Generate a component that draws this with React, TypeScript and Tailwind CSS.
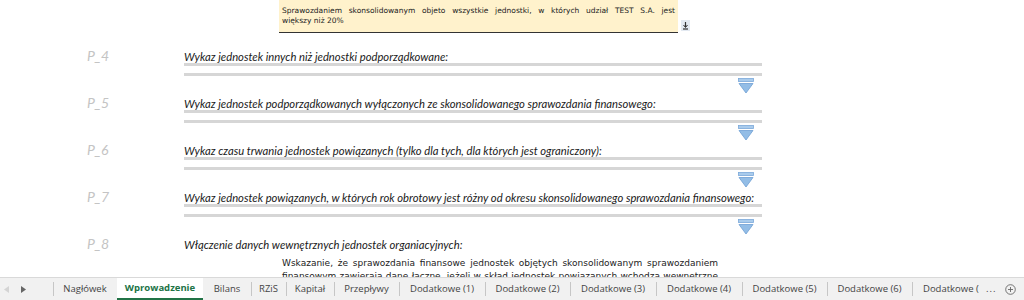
import React from 'react'

type Row = { id: string; title: string }

const rows: Row[] = [
  { id: 'P_4', title: 'Wykaz jednostek innych niż jednostki podporządkowane:' },
  { id: 'P_5', title: 'Wykaz jednostek podporządkowanych wyłączonych ze skonsolidowanego sprawozdania finansowego:' },
  { id: 'P_6', title: 'Wykaz czasu trwania jednostek powiązanych (tylko dla tych, dla których jest ograniczony):' },
  { id: 'P_7', title: 'Wykaz jednostek powiązanych, w których rok obrotowy jest różny od okresu skonsolidowanego sprawozdania finansowego:' },
]

const tabs: { name: string; w: string; active?: boolean }[] = [
  { name: 'Nagłówek', w: 'w-[64px]' },
  { name: 'Wprowadzenie', w: 'w-[86px]', active: true },
  { name: 'Bilans', w: 'w-[48px]' },
  { name: 'RZiS', w: 'w-[35px]' },
  { name: 'Kapitał', w: 'w-[48px]' },
  { name: 'Przepływy', w: 'w-[65px]' },
  { name: 'Dodatkowe (1)', w: 'w-[86px]' },
  { name: 'Dodatkowe (2)', w: 'w-[85px]' },
  { name: 'Dodatkowe (3)', w: 'w-[86px]' },
  { name: 'Dodatkowe (4)', w: 'w-[86px]' },
  { name: 'Dodatkowe (5)', w: 'w-[85px]' },
  { name: 'Dodatkowe (6)', w: 'w-[85px]' },
]

function ExpandIcon() {
  return (
    <svg width="18" height="16" viewBox="0 0 18 16">
      <rect x="1.5" y="0.5" width="15" height="3" fill="#a9cbec" stroke="#7aa9da" strokeWidth="0.8" />
      <polygon points="2,5.5 16,5.5 9,15" fill="#93bde6" stroke="#6f9fd4" strokeWidth="0.8" />
    </svg>
  )
}

function ResizeIcon() {
  return (
    <svg width="9" height="11" viewBox="0 0 9 11">
      <rect x="0" y="0" width="9" height="11" fill="#e3e9f1" />
      <path d="M4.5 2 V7" stroke="#333" strokeWidth="1.2" />
      <path d="M2.5 5 L4.5 7.5 L6.5 5" stroke="#333" strokeWidth="1" fill="none" />
      <path d="M2 9 H7" stroke="#333" strokeWidth="1.2" />
    </svg>
  )
}

function Section({ row }: { row: Row }) {
  return (
    <div className="flex h-[47px]">
      <div className="w-[184px] pl-[87px] text-[14px] leading-[11px] italic text-[#c4c4c4]">{row.id}</div>
      <div className="w-[578px] flex flex-col">
        <div className="h-[13px] text-[11.25px] leading-[13px] italic text-[#1a1a1a] whitespace-nowrap">{row.title}</div>
        <div className="h-[3px] bg-[#d6d6d6]" />
        <div className="h-[3px] mt-[7px] bg-[#d6d6d6]" />
        <div className="mt-[2px] flex justify-end pr-[7px]">
          <ExpandIcon />
        </div>
      </div>
    </div>
  )
}

function TabBar() {
  return (
    <div className="h-[23px] flex items-stretch bg-[#f1f1f1] border-t border-[#d9d9d9] font-['Open_Sans',sans-serif] text-[9.5px] text-[#444]">
      <div className="w-[53px] flex items-center">
        <svg width="5" height="7" viewBox="0 0 5 7" className="ml-[4px]">
          <polygon points="5,0 5,7 0,3.5" fill="#d4d4d4" />
        </svg>
        <svg width="5" height="7" viewBox="0 0 5 7" className="ml-[12px]">
          <polygon points="0,0 0,7 5,3.5" fill="#666" />
        </svg>
      </div>
      {tabs.map((t, i) => (
        <div
          key={t.name}
          className={
            t.active
              ? `${t.w} flex items-center justify-center bg-white border-b-2 border-[#217346] font-bold text-[#217346]`
              : `${t.w} flex items-center justify-center relative`
          }
        >
          {!t.active && !tabs[i - 1]?.active && (
            <span className="absolute left-0 top-[4px] bottom-[4px] w-px bg-[#c6c6c6]" />
          )}
          {t.name}
        </div>
      ))}
      <div className="w-[68px] relative flex items-center overflow-hidden whitespace-nowrap pl-[11px]">
        <span className="absolute left-0 top-[4px] bottom-[4px] w-px bg-[#c6c6c6]" />
        Dodatkowe (
      </div>
      <div className="w-[25px] flex items-center pl-[6px] tracking-[1px]">...</div>
      <div className="flex items-center">
        <svg width="11" height="11" viewBox="0 0 11 11">
          <circle cx="5.5" cy="5.5" r="4.8" fill="none" stroke="#666" strokeWidth="0.9" />
          <path d="M5.5 3 V8 M3 5.5 H8" stroke="#666" strokeWidth="0.9" />
        </svg>
      </div>
    </div>
  )
}

export default function App() {
  return (
    <div className="w-[1024px] h-[300px] flex flex-col bg-white overflow-hidden font-['Lato',sans-serif]">
      <div className="h-[277px] overflow-hidden">
        <div className="flex items-end pl-[279px]">
          <div className="w-[399px] h-[33px] bg-[#fff2cc] border-b border-[#333] pt-[6px] px-[3px] font-['DejaVu_Sans',sans-serif] text-[7.5px] leading-[10px] text-[#222]">
            <div className="text-justify [text-align-last:justify]">
              Sprawozdaniem skonsolidowanym objeto wszystkie jednostki, w których udział TEST S.A. jest
            </div>
            <div>większy niż 20%</div>
          </div>
          <div className="ml-[3px] mb-[2px]">
            <ResizeIcon />
          </div>
        </div>
        <div className="mt-[17px]">
          {rows.map((r) => (
            <Section key={r.id} row={r} />
          ))}
          <div className="flex">
            <div className="w-[184px] pl-[87px] text-[14px] leading-[11px] italic text-[#c4c4c4]">P_8</div>
            <div className="w-[578px]">
              <div className="h-[13px] text-[11.25px] leading-[13px] italic text-[#1a1a1a]">
                Włączenie danych wewnętrznych jednostek organiacyjnych:
              </div>
              <div className="mt-[6px] ml-[98px] w-[436px] font-['DejaVu_Sans',sans-serif] text-[9px] leading-[13px] text-[#222]">
                <div className="text-justify [text-align-last:justify]">
                  Wskazanie, że sprawozdania finansowe jednostek objętych skonsolidowanym sprawozdaniem
                </div>
                <div className="text-justify [text-align-last:justify] whitespace-nowrap">
                  finansowym zawierają dane łączne, jeżeli w skład jednostek powiązanych wchodzą wewnętrzne
                </div>
              </div>
            </div>
          </div>
        </div>
      </div>
      <TabBar />
    </div>
  )
}
